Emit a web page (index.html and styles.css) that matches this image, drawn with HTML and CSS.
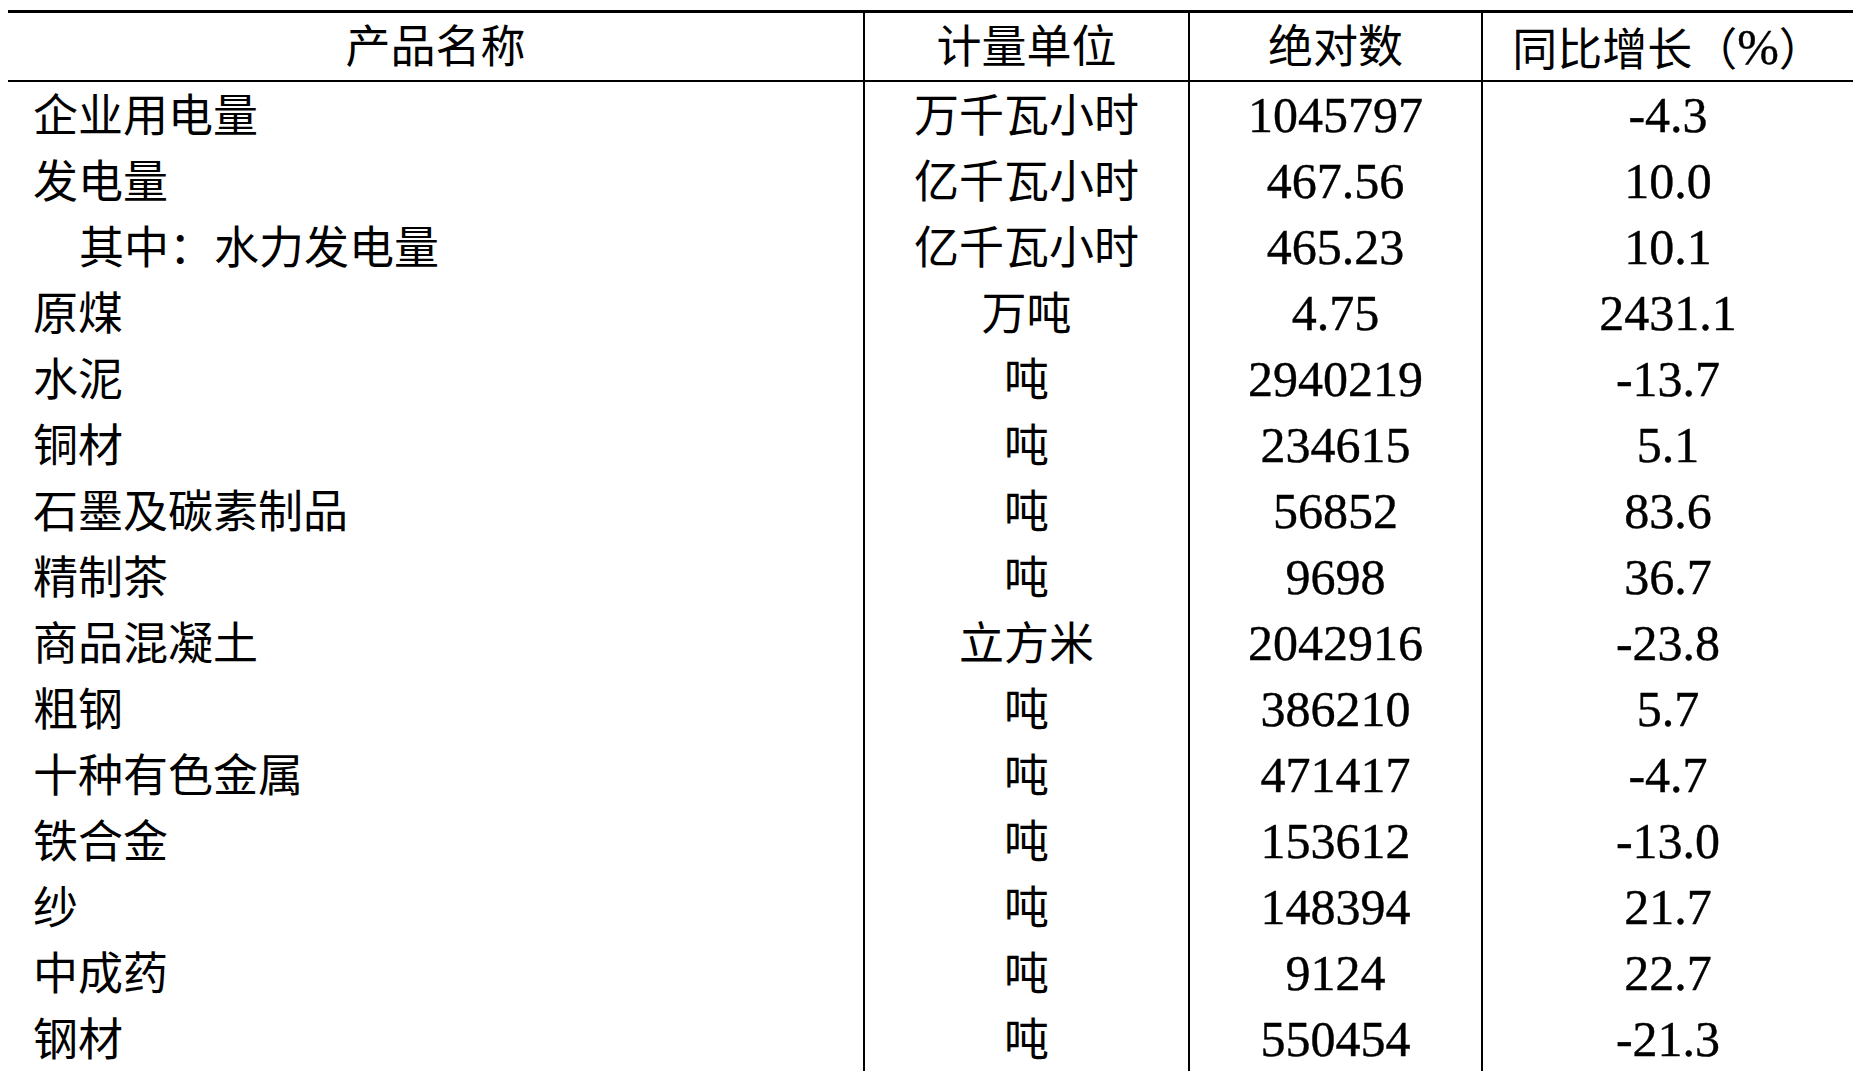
FILE: index.html
```html
<!DOCTYPE html>
<html lang="zh-CN">
<head>
<meta charset="utf-8">
<title>主要工业产品产量</title>
<link rel="stylesheet" href="styles.css">
</head>
<body>
<table class="stats">
  <colgroup>
    <col class="c1"><col class="c2"><col class="c3"><col class="c4">
  </colgroup>
  <thead>
    <tr><th>产品名称</th><th>计量单位</th><th>绝对数</th><th>同比增长（<span class="num">%</span>）</th></tr>
  </thead>
  <tbody>
    <tr><td class="name">企业用电量</td><td>万千瓦小时</td><td><span class="num">1045797</span></td><td><span class="num">-4.3</span></td></tr>
    <tr><td class="name">发电量</td><td>亿千瓦小时</td><td><span class="num">467.56</span></td><td><span class="num">10.0</span></td></tr>
    <tr><td class="name sub">其中：水力发电量</td><td>亿千瓦小时</td><td><span class="num">465.23</span></td><td><span class="num">10.1</span></td></tr>
    <tr><td class="name">原煤</td><td>万吨</td><td><span class="num">4.75</span></td><td><span class="num">2431.1</span></td></tr>
    <tr><td class="name">水泥</td><td>吨</td><td><span class="num">2940219</span></td><td><span class="num">-13.7</span></td></tr>
    <tr><td class="name">铜材</td><td>吨</td><td><span class="num">234615</span></td><td><span class="num">5.1</span></td></tr>
    <tr><td class="name">石墨及碳素制品</td><td>吨</td><td><span class="num">56852</span></td><td><span class="num">83.6</span></td></tr>
    <tr><td class="name">精制茶</td><td>吨</td><td><span class="num">9698</span></td><td><span class="num">36.7</span></td></tr>
    <tr><td class="name">商品混凝土</td><td>立方米</td><td><span class="num">2042916</span></td><td><span class="num">-23.8</span></td></tr>
    <tr><td class="name">粗钢</td><td>吨</td><td><span class="num">386210</span></td><td><span class="num">5.7</span></td></tr>
    <tr><td class="name">十种有色金属</td><td>吨</td><td><span class="num">471417</span></td><td><span class="num">-4.7</span></td></tr>
    <tr><td class="name">铁合金</td><td>吨</td><td><span class="num">153612</span></td><td><span class="num">-13.0</span></td></tr>
    <tr><td class="name">纱</td><td>吨</td><td><span class="num">148394</span></td><td><span class="num">21.7</span></td></tr>
    <tr><td class="name">中成药</td><td>吨</td><td><span class="num">9124</span></td><td><span class="num">22.7</span></td></tr>
    <tr><td class="name">钢材</td><td>吨</td><td><span class="num">550454</span></td><td><span class="num">-21.3</span></td></tr>
  </tbody>
</table>
</body>
</html>
```
FILE: styles.css
```css
html, body {
  margin: 0;
  padding: 0;
  background: #fff;
  overflow: hidden;
}
body {
  padding: 10px 0 0 8px;
  font-family: "Liberation Serif", "Noto Sans CJK SC", serif;
  color: #000;
}
.stats {
  border-collapse: collapse;
  table-layout: fixed;
  width: 1845px;
  border-top: 3px solid #000;
}
.c1 { width: 856px; }
.c2 { width: 325px; }
.c3 { width: 293px; }
.c4 { width: 371px; }
.stats th,
.stats td {
  padding: 4px 0 0 0;
  font-weight: normal;
  font-size: 45px;
  text-align: center;
  vertical-align: middle;
  white-space: nowrap;
  overflow: visible;
  line-height: 1;
}
.stats th {
  height: 63px;
  border-bottom: 2px solid #000;
}
.stats td {
  height: 62px;
}
.stats th + th,
.stats td + td {
  border-left: 2px solid #000;
}
.stats td.name {
  text-align: left;
  padding-left: 25px;
}
.stats td.sub {
  padding-left: 71px;
}
.num {
  display: inline-block;
  font-size: 50px;
  line-height: 1;
  transform: translateY(-2px);
  -webkit-text-stroke: 0.4px #000;
}
```
